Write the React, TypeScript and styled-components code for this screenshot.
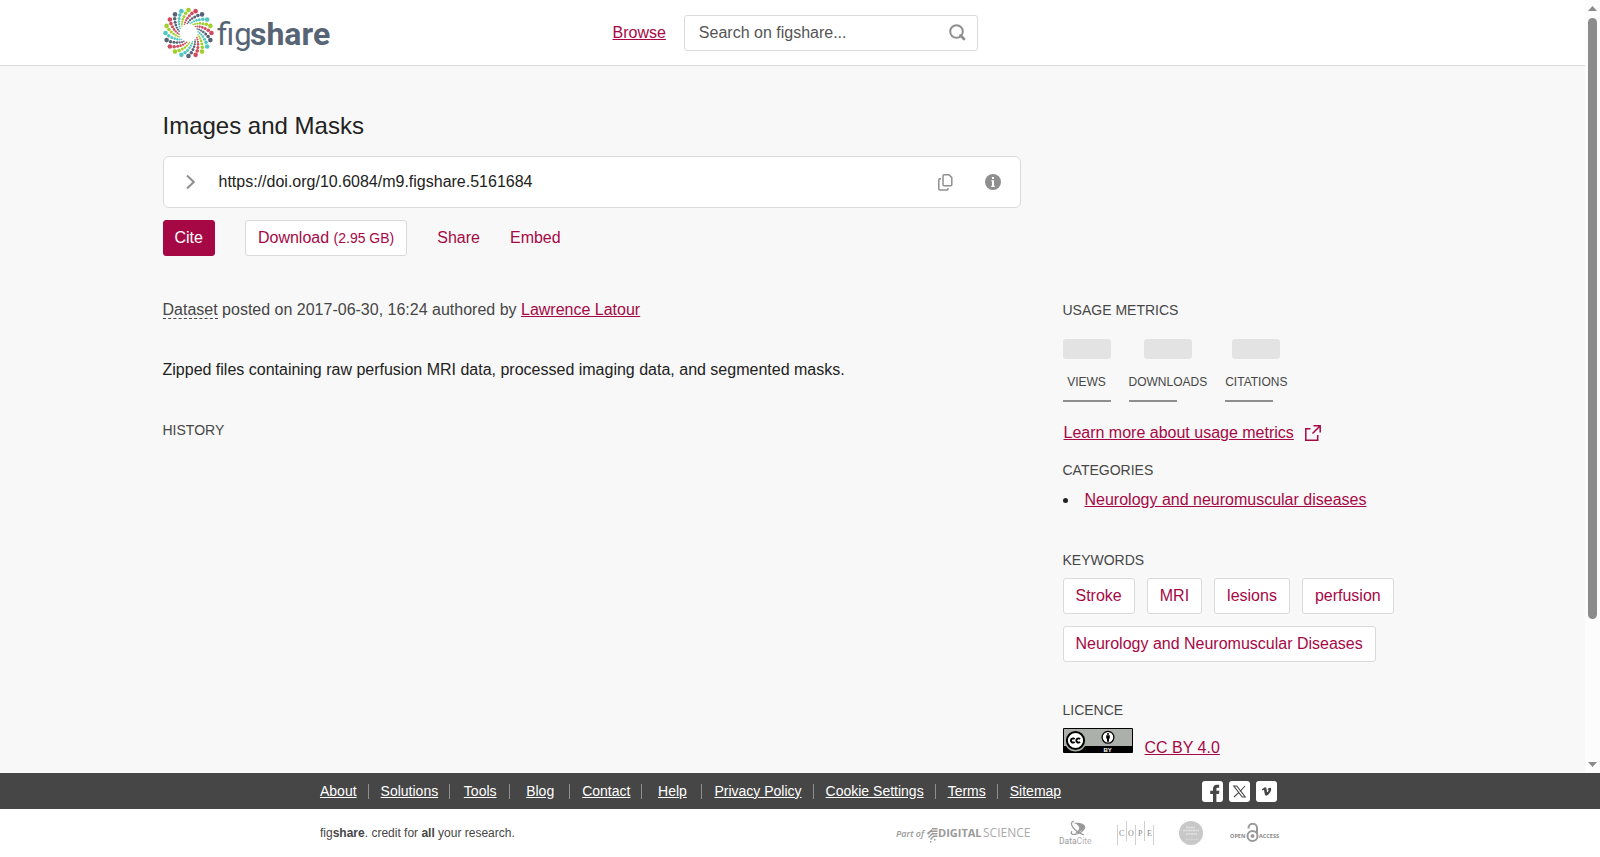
import React from "react";
import styled, { createGlobalStyle } from "styled-components";

const accent = "#a60845";
const line = "#dadada";
const grey = "#8f8f8f";

const GlobalStyle = createGlobalStyle`
  *, *::before, *::after { box-sizing: border-box; }
  body { margin: 0; }
  body, button, input {
    font-family: "Liberation Sans", Arial, sans-serif;
    font-size: 16px;
    line-height: 24px;
    color: #222;
  }
  h1, h2, p, ul { margin: 0; padding: 0; font-weight: 400; }
  svg { display: block; flex: none; }
`;

const Shell = styled.div`
  display: flex;
  flex-direction: column;
  height: 100vh;
  background: #f8f8f8;
`;

const Viewport = styled.div`
  display: flex;
  flex: 1;
  min-height: 0;
`;

const Page = styled.div`
  flex: 1;
  min-width: 0;
  overflow: hidden;
`;

const Track = styled.div`
  display: flex;
  flex-direction: column;
  align-items: center;
  width: 15px;
  padding: 6px 0;
  background: #fcfcfc;
`;

const Thumb = styled.div`
  flex: 601;
  width: 9px;
  margin-top: 7px;
  border-radius: 5px;
  background: #8b8b8b;
`;

const TrackRest = styled.div`
  flex: 143;
`;

const Container = styled.div`
  max-width: 1260px;
  margin: 0 auto;
`;

const Header = styled.header`
  background: #fff;
  border-bottom: 1px solid ${line};
`;

const HeaderRow = styled(Container)`
  display: flex;
  align-items: center;
  height: 65px;
`;

const LogoLink = styled.a`
  flex: 0 1 450px;
`;

const TextLink = styled.a`
  color: ${accent};
  text-decoration: underline;
`;

const SearchForm = styled.form`
  display: flex;
  align-items: center;
  width: 294px;
  height: 36px;
  margin-left: 18px;
  border: 1px solid ${line};
  border-radius: 3px;
  background: #fff;
`;

const SearchInput = styled.input`
  flex: 1;
  min-width: 0;
  padding: 0 0 0 14px;
  border: 0;
  background: none;
  &::placeholder { color: #555; opacity: 1; }
`;

const IconButton = styled.button`
  display: flex;
  padding: 0;
  border: 0;
  background: none;
  color: ${grey};
  cursor: pointer;
`;

const SearchButton = styled(IconButton)`
  padding: 0 11px;
`;

const Columns = styled(Container)`
  display: grid;
  grid-template-columns: minmax(0, 1fr) 360px;
  gap: 42px;
  padding-top: 45px;
`;

const Intro = styled.section`
  grid-area: 1 / 1;
`;

const Title = styled.h1`
  font-size: 24px;
  line-height: 30px;
`;

const DoiBox = styled.div`
  display: flex;
  align-items: center;
  height: 52px;
  margin-top: 15px;
  padding: 0 19px 0 22px;
  border: 1px solid ${line};
  border-radius: 6px;
  background: #fff;
`;

const DoiText = styled.span`
  flex: 1;
  margin-left: 24px;
`;

const DoiTools = styled.div`
  display: flex;
  gap: 32px;
`;

const Actions = styled.div`
  display: flex;
  gap: 30px;
  margin-top: 12px;
`;

const ActionButton = styled.button<{ $kind: "solid" | "outline" | "plain" }>`
  height: 36px;
  padding: 0 ${({ $kind }) => ($kind === "plain" ? 0 : $kind === "solid" ? 11 : 12)}px;
  border: ${({ $kind }) => ($kind === "plain" ? "0" : `1px solid ${$kind === "solid" ? accent : line}`)};
  border-radius: 3px;
  background: ${({ $kind }) => ($kind === "solid" ? accent : $kind === "outline" ? "#fff" : "none")};
  color: ${({ $kind }) => ($kind === "solid" ? "#fff" : accent)};
  cursor: pointer;
`;

const FileSize = styled.span`
  font-size: 14px;
`;

const Body = styled.section`
  grid-area: 2 / 1;
  display: flex;
  flex-direction: column;
  gap: 36px;
`;

const Meta = styled.p`
  color: #464646;
`;

const ItemType = styled.span`
  border-bottom: 1px dashed #464646;
`;

const SectionTitle = styled.h2`
  font-size: 14px;
  line-height: 24px;
  color: #464646;
  text-transform: uppercase;
`;

const Sidebar = styled.aside`
  grid-area: 2 / 2;
`;

const Block = styled.section<{ $gap: number }>`
  display: flex;
  flex-direction: column;
  gap: 6px;
  margin-top: ${({ $gap }) => $gap}px;
`;

const Metrics = styled.div`
  display: flex;
  gap: 18px;
  margin: 17px 0 19px;
`;

const Metric = styled.div`
  display: flex;
  flex-direction: column;
  align-items: center;
  font-size: 12px;
  line-height: 18px;
  color: #464646;
  &::before {
    content: "";
    width: 48px;
    height: 20px;
    margin-bottom: 14px;
    border-radius: 3px;
    background: #e3e3e3;
  }
  &::after {
    content: "";
    align-self: flex-start;
    width: 48px;
    height: 2px;
    margin-top: 9px;
    background: ${grey};
  }
`;

const LearnMore = styled(TextLink)`
  display: flex;
  align-items: center;
  gap: 11px;
  padding-left: 1px;
`;

const Categories = styled.ul`
  list-style-position: inside;
`;

const Tags = styled.div`
  display: flex;
  flex-wrap: wrap;
  gap: 12px;
`;

const Tag = styled.a`
  height: 36px;
  padding: 5px 12px;
  border: 1px solid ${line};
  border-radius: 3px;
  background: #fff;
  color: ${accent};
  text-decoration: none;
`;

const Licence = styled.div`
  display: flex;
  align-items: baseline;
  gap: 12px;
`;

const FooterBar = styled.footer<{ $dark?: boolean }>`
  background: ${({ $dark }) => ($dark ? "#464646" : "#fff")};
`;

const FooterRow = styled.div<{ $height: number }>`
  display: flex;
  align-items: center;
  justify-content: space-between;
  max-width: 960px;
  height: ${({ $height }) => $height}px;
  margin: 0 auto;
`;

const FooterNav = styled.nav`
  display: flex;
  margin-left: -12px;
`;

const FooterLink = styled.a`
  min-width: 60px;
  padding: 0 11px 0 12px;
  border-right: 1px solid ${grey};
  color: #fff;
  font-size: 14px;
  line-height: 15px;
  text-align: center;
  white-space: nowrap;
  &:last-child { border-right: 0; }
`;

const Social = styled.div`
  display: flex;
  gap: 6px;
  margin-right: 3px;
`;

const Tagline = styled.p`
  font-size: 12px;
  line-height: 18px;
  color: #464646;
`;

const Partners = styled.div`
  display: flex;
  align-items: center;
  gap: 25px;
`;

const swirlColours = ["#a3cf2e", "#d14a5f", "#566475", "#52c6c0"];
const swirlDots = [
  { r: 23, size: 2.3, turn: 0 },
  { r: 19.9, size: 1.8, turn: -8 },
  { r: 17.2, size: 1.5, turn: -15 },
  { r: 14.9, size: 1.3, turn: -22 },
  { r: 12.9, size: 1.15, turn: -29 },
  { r: 11.1, size: 1, turn: -36 },
  { r: 9.6, size: 0.8, turn: -43 },
];

const FigshareLogo = () => (
  <svg width="170" height="56" viewBox="0 0 170 56" role="img" aria-label="figshare">
    {Array.from({ length: 20 }, (_, arm) =>
      swirlDots.map((dot, i) => {
        const a = ((arm * 18 + dot.turn) * Math.PI) / 180;
        return (
          <circle
            key={`${arm}-${i}`}
            cx={25.5 + dot.r * Math.sin(a)}
            cy={28 - dot.r * Math.cos(a)}
            r={dot.size}
            fill={swirlColours[arm % 4]}
          />
        );
      })
    )}
    <g fill="#566475" fontFamily="Roboto, sans-serif" fontSize="32">
      <text x="54" y="40" fontWeight="400" fontSize="31">fig</text>
      <text x="87" y="40" fontWeight="700">share</text>
    </g>
  </svg>
);

const SearchIcon = () => (
  <svg width="17" height="17" viewBox="0 0 17 17" fill="none" stroke="currentColor" strokeWidth="2">
    <circle cx="7.5" cy="7.5" r="6.3" />
    <path d="M11.5 11.5 15 15" strokeWidth="2.8" strokeLinecap="round" />
  </svg>
);

const ChevronIcon = () => (
  <svg width="9" height="14" viewBox="0 0 9 14" fill="none" stroke="currentColor" strokeWidth="2">
    <path d="M1 .5 7.700 7 1 13.500" />
  </svg>
);

const CopyIcon = () => (
  <svg width="15" height="17" viewBox="0 0 15 17" fill="none" stroke="currentColor" strokeWidth="1.5">
    <path d="M6 .8h5l2.800 2.800v7.100a1 1 0 0 1-1 1H6a1 1 0 0 1-1-1V1.800a1 1 0 0 1 1-1z" />
    <path d="M3 4.800H1.800a1 1 0 0 0-1 1V15a1 1 0 0 0 1 1H9a1 1 0 0 0 1-1v-1" />
  </svg>
);

const InfoIcon = () => (
  <svg width="16" height="16" viewBox="0 0 16 16">
    <circle cx="8" cy="8" r="8" fill="currentColor" />
    <path d="M7 3h2v2H7zM6.300 6.300H9v5.500h.800V13H6.200v-1.200H7V7.500h-.7z" fill="#fff" />
  </svg>
);

const ExternalIcon = () => (
  <svg width="16" height="16" viewBox="0 0 16 16" fill="none" stroke="currentColor" strokeWidth="1.500">
    <path d="M5.500 3.700H.8v11.500h11.900v-5.200M8.500.8h6.700v6.700M15 1 7.500 8.500" />
  </svg>
);

const CcBadge = () => (
  <svg width="70" height="25" viewBox="0 0 70 25" role="img" aria-label="CC BY">
    <rect width="70" height="25" rx="1" />
    <path d="M1 1h68v17H1z" fill="#abb1aa" />
    <circle cx="12.500" cy="12.500" r="11" fill="#abb1aa" />
    <circle cx="12.500" cy="12.500" r="8.600" fill="#fff" stroke="#000" strokeWidth="2" />
    <g fill="none" stroke="#000" strokeWidth="1.900">
      <path d="M11.600 11.100a2.100 2.100 0 1 0 0 2.800M17 11.100a2.100 2.100 0 1 0 0 2.800" />
    </g>
    <circle cx="45" cy="9.300" r="5.900" fill="#fff" stroke="#000" strokeWidth="1.300" />
    <circle cx="45" cy="5.900" r="1" />
    <path d="M43.200 7.300h3.600v3.200h-.8v3.300h-2v-3.300h-.8z" />
    <text x="40.500" y="23.500" fill="#fff" fontFamily="Liberation Sans, sans-serif" fontWeight="700" fontSize="6">BY</text>
  </svg>
);

const SocialLink = ({ label, children }: { label: string; children: React.ReactNode }) => (
  <a href="#" aria-label={label}>
    <svg width="21" height="21" viewBox="0 0 21 21">
      <rect width="21" height="21" rx="3" fill="#fff" />
      {children}
    </svg>
  </a>
);

const DigitalScienceLogo = () => (
  <svg width="138" height="22" viewBox="0 0 138 22" fill="#999" fontFamily="Open Sans, sans-serif">
    <text x="0" y="14.500" fontSize="9" fontStyle="italic" fontWeight="600">Part of</text>
    <path d="M36 6h5.500v1.500H36zM35 8.500h6.500V10H35zM36 11h5.500v1.500H36zM37 13.500h4.500V15H37zM31 11l5-4v2l-4 4zM32 15l5-5v2l-4 4zM34 17l3-3 1 1-3 3zM34 19h1.500v1.500H34zM38 17h1.500v1.500H38z" />
    <text x="42" y="14.500" fontSize="11" fontWeight="700">DIGITAL</text>
    <text x="87" y="14.500" fontSize="12" fontWeight="400" fill="#aaa">SCIENCE</text>
  </svg>
);

const DataCiteLogo = () => (
  <svg width="33" height="28" viewBox="0 0 33 28" fill="#999">
    <g fill="none" stroke="#999" strokeWidth="1.200">
      <path d="M15 2c-6 1-1 10 10 14M13 12c-4 6 10 4 13-4" />
    </g>
    <path d="M13 4c8-1 12 1 13 3s-4 6-11 8c4-3 6-5 5-7s-3-4-7-4z" />
    <text x="0" y="25" fontFamily="Roboto, sans-serif" fontSize="8.500">Data<tspan fill="#b5b5b5">Cite</tspan></text>
  </svg>
);

const CopeLogo = () => (
  <svg width="37" height="24" viewBox="0 0 37 24">
    <path d="M.5 4v20M9.500 0v20M18.500 4v20M27.500 0v20M36.500 4v20" stroke="#d0d0d0" />
    <text y="15" fill="#888" fontFamily="Liberation Serif, serif" fontSize="8">
      <tspan x="2">C</tspan><tspan x="11">O</tspan><tspan x="21">P</tspan><tspan x="30">E</tspan>
    </text>
  </svg>
);

const SealLogo = () => (
  <svg width="26" height="24" viewBox="0 0 26 24">
    <circle cx="12" cy="12" r="12" fill="#c8c8c8" />
    <g stroke="#e2e2e2" strokeDasharray="2 .5">
      <path d="M7 6.500h9M4 9.500h16M7 13h11" strokeWidth="1.600" />
      <path d="M7 18.500h12" strokeWidth=".6" />
    </g>
  </svg>
);

const OpenAccessLogo = () => (
  <svg width="50" height="20" viewBox="0 0 50 20" fill="none" stroke="#999">
    <circle cx="22.500" cy="13" r="5" strokeWidth="2" />
    <circle cx="22.500" cy="13" r="1.500" fill="#999" />
    <path d="M18.500 5.500V5a4 4 0 0 1 8.500 0v6" strokeWidth="2" />
    <g fill="#888" stroke="none" fontFamily="Open Sans, sans-serif" fontWeight="700" fontSize="5.500">
      <text x="0" y="15">OPEN</text>
      <text x="29" y="15">ACCESS</text>
    </g>
  </svg>
);

const footerLinks = [
  "About", "Solutions", "Tools", "Blog", "Contact", "Help",
  "Privacy Policy", "Cookie Settings", "Terms", "Sitemap",
];
const keywords = ["Stroke", "MRI", "lesions", "perfusion", "Neurology and Neuromuscular Diseases"];

export default function App() {
  return (
    <Shell>
      <GlobalStyle />
      <Viewport>
        <Page>
          <Header>
            <HeaderRow>
              <LogoLink href="#"><FigshareLogo /></LogoLink>
              <TextLink href="#">Browse</TextLink>
              <SearchForm role="search">
                <SearchInput type="text" aria-label="Search on figshare" placeholder="Search on figshare..." />
                <SearchButton type="button" aria-label="Search"><SearchIcon /></SearchButton>
              </SearchForm>
            </HeaderRow>
          </Header>
          <Columns as="main">
            <Intro>
              <Title>Images and Masks</Title>
              <DoiBox>
                <IconButton type="button" aria-label="Show citation"><ChevronIcon /></IconButton>
                <DoiText>https://doi.org/10.6084/m9.figshare.5161684</DoiText>
                <DoiTools>
                  <IconButton type="button" aria-label="Copy DOI"><CopyIcon /></IconButton>
                  <IconButton type="button" aria-label="DOI information"><InfoIcon /></IconButton>
                </DoiTools>
              </DoiBox>
              <Actions>
                <ActionButton type="button" $kind="solid">Cite</ActionButton>
                <ActionButton type="button" $kind="outline">Download <FileSize>(2.95 GB)</FileSize></ActionButton>
                <ActionButton type="button" $kind="plain">Share</ActionButton>
                <ActionButton type="button" $kind="plain">Embed</ActionButton>
              </Actions>
            </Intro>
            <Body>
              <Meta>
                <ItemType>Dataset</ItemType> posted on 2017-06-30, 16:24 authored by{" "}
                <TextLink href="#">Lawrence Latour</TextLink>
              </Meta>
              <p>Zipped files containing raw perfusion MRI data, processed imaging data, and segmented masks.</p>
              <SectionTitle>History</SectionTitle>
            </Body>
            <Sidebar>
              <SectionTitle>Usage metrics</SectionTitle>
              <Metrics>
                <Metric>VIEWS</Metric>
                <Metric>DOWNLOADS</Metric>
                <Metric>CITATIONS</Metric>
              </Metrics>
              <LearnMore href="#">Learn more about usage metrics <ExternalIcon /></LearnMore>
              <Block $gap={13}>
                <SectionTitle>Categories</SectionTitle>
                <Categories>
                  <li><TextLink href="#">Neurology and neuromuscular diseases</TextLink></li>
                </Categories>
              </Block>
              <Block $gap={36}>
                <SectionTitle>Keywords</SectionTitle>
                <Tags>
                  {keywords.map((word) => <Tag key={word} href="#">{word}</Tag>)}
                </Tags>
              </Block>
              <Block $gap={36}>
                <SectionTitle>Licence</SectionTitle>
                <Licence>
                  <CcBadge />
                  <TextLink href="#">CC BY 4.0</TextLink>
                </Licence>
              </Block>
            </Sidebar>
          </Columns>
        </Page>
        <Track aria-hidden="true">
          <svg width="9" height="5" viewBox="0 0 9 5"><path d="M4.500 0 9 5H0z" fill="#8b8b8b" /></svg>
          <Thumb />
          <TrackRest />
          <svg width="9" height="5" viewBox="0 0 9 5"><path d="M0 0h9L4.500 5z" fill="#8b8b8b" /></svg>
        </Track>
      </Viewport>
      <FooterBar $dark>
        <FooterRow $height={36}>
          <FooterNav>
            {footerLinks.map((label) => <FooterLink key={label} href="#">{label}</FooterLink>)}
          </FooterNav>
          <Social>
            <SocialLink label="Facebook">
              <path d="M11 21v-8H8.200v-3.300H11V7.800C11 5 12.500 3.700 15 3.700h2.200v3.100h-1.500c-1 0-1.300.5-1.300 1.400v1.500h3l-.4 3.300h-2.600v8z" fill="#464646" />
            </SocialLink>
            <SocialLink label="X">
              <path d="M4.800 5h3l8.400 11h-3zM16 5l-5 5.500M9.700 11.600 5 16" fill="none" stroke="#464646" strokeWidth="1.100" />
            </SocialLink>
            <SocialLink label="Vimeo">
              <path d="M5.800 8.300 9 6.200c1.500-.3 1.600 1.500 1.900 4 .3 1.500.7 1.200 1.500-.5.5-1-.3-1.100-.9-.9.500-2 3.700-3 3.700-.5 0 2.200-3 6.300-4.900 6.500-1.600 0-1.600-2.500-2.200-5.200-.2-.6-.4-.8-1.500-.1z" fill="#464646" />
            </SocialLink>
          </Social>
        </FooterRow>
      </FooterBar>
      <FooterBar as="div">
        <FooterRow $height={48}>
          <Tagline>fig<b>share</b>. credit for <b>all</b> your research.</Tagline>
          <Partners>
            <DigitalScienceLogo />
            <DataCiteLogo />
            <CopeLogo />
            <SealLogo />
            <OpenAccessLogo />
          </Partners>
        </FooterRow>
      </FooterBar>
    </Shell>
  );
}
